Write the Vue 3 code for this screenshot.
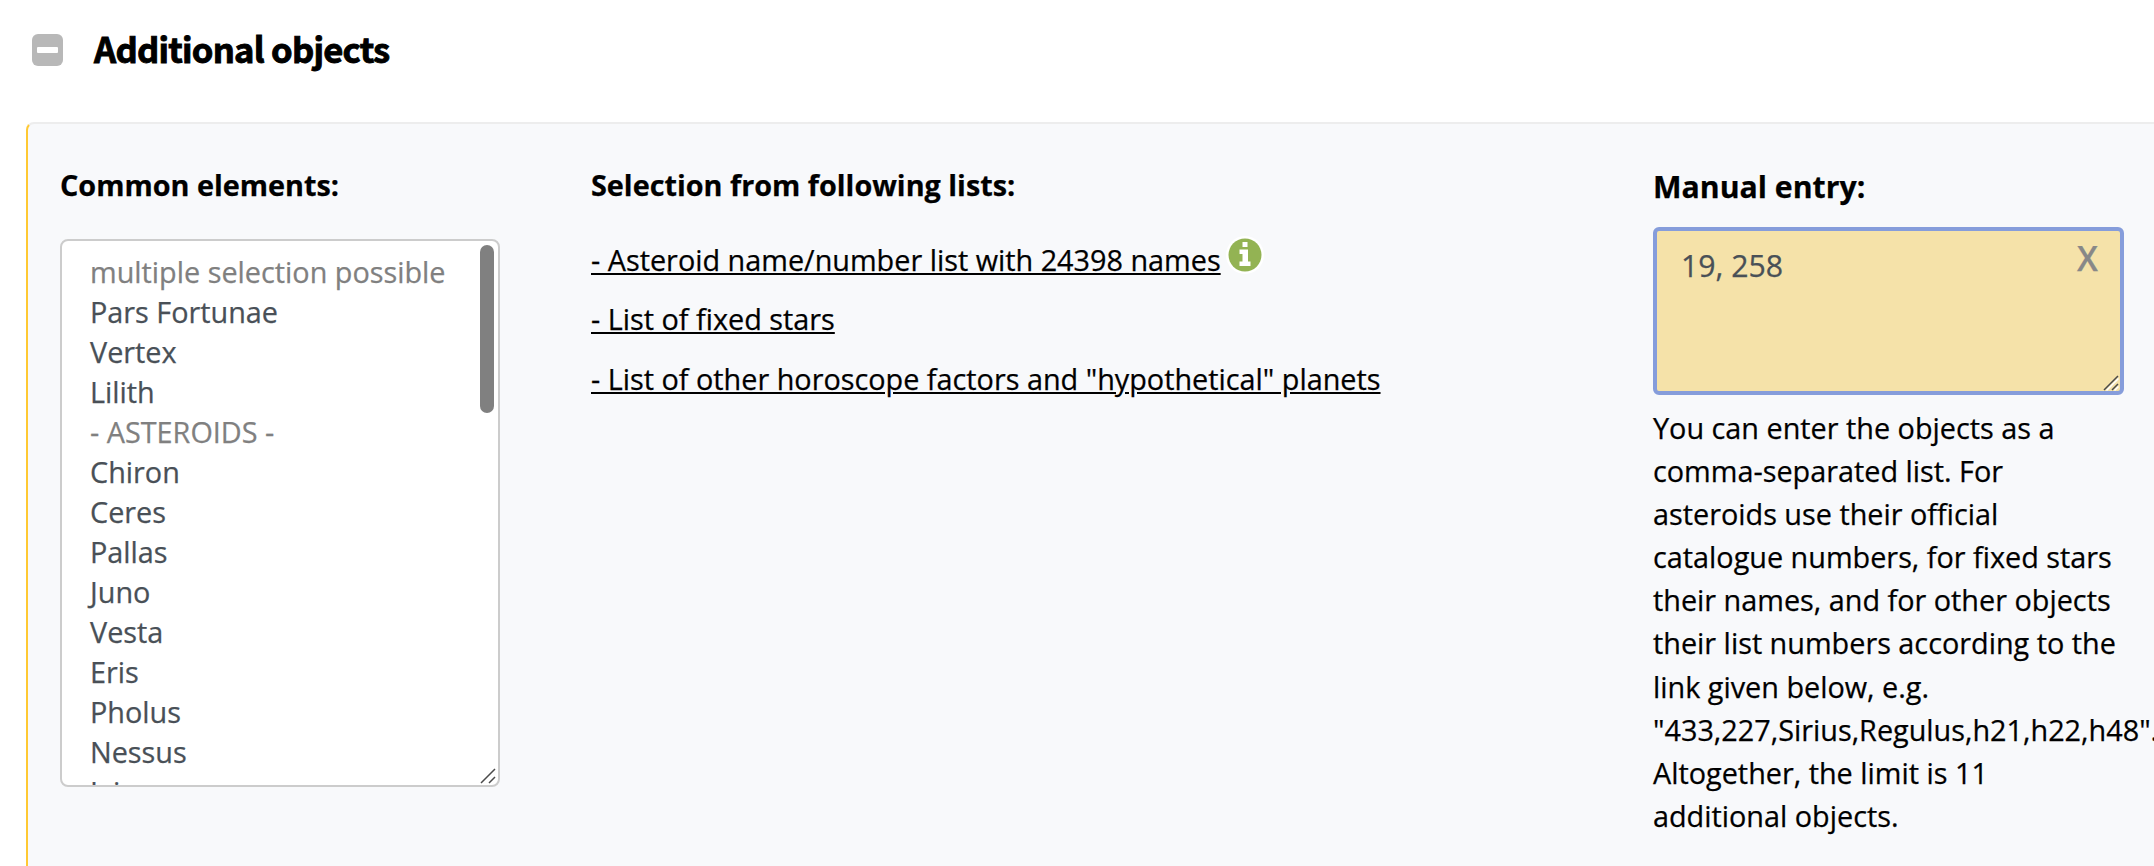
<template>
  <div class="page">
    <div class="section-title">
      <button class="toggle" aria-label="collapse">
        <span class="bar"></span>
      </button>
      <h2>Additional objects</h2>
    </div>

    <div class="panel">
      <div class="column common">
        <h3>Common elements:</h3>
        <div class="listbox">
          <div
            v-for="item in elements"
            :key="item.name"
            class="option"
            :class="{ disabled: item.disabled, selected: selected.includes(item.name) }"
            @click="toggle(item)"
          >{{ item.name }}</div>
          <span class="scrollbar"></span>
          <svg class="grip" width="16" height="16" viewBox="0 0 16 16">
            <path d="M1 15L15 1M9 15L15 9" />
          </svg>
        </div>
      </div>

      <div class="column lists">
        <h3>Selection from following lists:</h3>
        <div v-for="link in links" :key="link.text" class="link-row">
          <a href="#">{{ link.text }}</a>
          <svg v-if="link.info" class="info" width="38" height="38" viewBox="0 0 38 38">
            <circle cx="19" cy="19" r="19" fill="#fff" />
            <circle cx="19" cy="19" r="16.5" fill="#93b353" />
            <path fill="#fff" d="M16.5 6h5v5h-5zM13.500 13.5h8.500v12h2.500v4.500h-11v-4.500h3v-7.500h-3z" />
          </svg>
        </div>
      </div>

      <div class="column manual">
        <h3>Manual entry:</h3>
        <div class="entry">
          <textarea v-model="manual" spellcheck="false"></textarea>
          <button class="clear" @click="manual = ''">X</button>
          <svg class="grip" width="16" height="16" viewBox="0 0 16 16">
            <path class="light" d="M3.500 15.500L15.500 3.500M11.500 15.500L15.500 11.500" />
            <path d="M1 15L15 1M9 15L15 9" />
          </svg>
        </div>
        <p>
          You can enter the objects as a comma-separated list. For asteroids use their official
          catalogue numbers, for fixed stars their names, and for other objects their list numbers
          according to the link given below, e.g. "433,227,Sirius,Regulus,h21,h22,h48".
          Altogether, the limit is 11 additional objects.
        </p>
      </div>
    </div>
  </div>
</template>

<script setup>
import { ref } from 'vue';

const elements = [
  { name: 'multiple selection possible', disabled: true },
  { name: 'Pars Fortunae' },
  { name: 'Vertex' },
  { name: 'Lilith' },
  { name: '- ASTEROIDS -', disabled: true },
  { name: 'Chiron' },
  { name: 'Ceres' },
  { name: 'Pallas' },
  { name: 'Juno' },
  { name: 'Vesta' },
  { name: 'Eris' },
  { name: 'Pholus' },
  { name: 'Nessus' },
  { name: 'Ixion' },
];

const links = [
  { text: '- Asteroid name/number list with 24398 names', info: true },
  { text: '- List of fixed stars' },
  { text: '- List of other horoscope factors and "hypothetical" planets' },
];

const selected = ref([]);
const manual = ref('19, 258');

const toggle = (item) => {
  if (item.disabled) return;
  if (selected.value.includes(item.name)) {
    selected.value = selected.value.filter((name) => name !== item.name);
  } else {
    selected.value.push(item.name);
  }
};
</script>

<style>
body {
  background: #fff;
  overflow: hidden;
}
</style>

<style scoped>
.page {
  box-sizing: border-box;
  width: 2154px;
  height: 866px;
  overflow: hidden;
  font-family: "Open Sans", "Noto Sans", sans-serif;
  font-size: 28.8px;
  color: #000;
  -webkit-text-stroke: 0.25px currentColor;
}

.section-title {
  display: flex;
  align-items: center;
  height: 100px;
  padding-left: 32px;
  margin-bottom: 22px;
}

.toggle {
  display: flex;
  align-items: center;
  justify-content: center;
  width: 31px;
  height: 32px;
  margin-right: 31px;
  padding: 0;
  border: 0;
  border-radius: 6px;
  background: #b8b8b8;
}

.toggle .bar {
  width: 21px;
  height: 6px;
  border-radius: 1px;
  background: #fff;
}

h2 {
  margin: 0 0 5px;
  font-family: "Noto Sans CJK SC", sans-serif;
  font-size: 34.6px;
  font-weight: 700;
  line-height: 50px;
  letter-spacing: -0.75px;
  -webkit-text-stroke: 0.9px #000;
}

.panel {
  box-sizing: border-box;
  display: grid;
  grid-template-columns: 531px 1062px 470px;
  width: 2180px;
  height: 800px;
  margin-left: 26px;
  padding: 39px 0 0 32px;
  border: 2px solid #ededed;
  border-left-color: #ffc933;
  border-radius: 8px;
  background: #f8f9fb;
}

h3 {
  margin: 0;
  font-size: 28.8px;
  font-weight: 700;
  line-height: 43px;
  white-space: nowrap;
}

.listbox {
  position: relative;
  box-sizing: border-box;
  width: 440px;
  height: 548px;
  margin-top: 33px;
  padding: 11px 28px 0;
  overflow: hidden;
  border: 2px solid #ccc;
  border-radius: 8px;
  background: #fff;
}

.option {
  height: 40px;
  line-height: 40px;
  color: #495057;
  -webkit-text-stroke-color: currentColor;
  white-space: nowrap;
}

.option.disabled {
  color: #808080;
}

.option.selected {
  background: #d6d6d6;
}

.scrollbar {
  position: absolute;
  top: 4px;
  right: 4px;
  width: 14px;
  height: 168px;
  border-radius: 7px;
  background: #808080;
}

.grip {
  position: absolute;
  right: 2px;
  bottom: 1px;
  fill: none;
  stroke: #4a4a4a;
  stroke-width: 1.5;
}

.grip .light {
  stroke: #fff;
}

.lists h3 {
  margin-bottom: 24px;
}

.link-row {
  display: flex;
  height: 59.4px;
  line-height: 59px;
  white-space: nowrap;
}

a {
  color: #000;
  text-decoration: underline;
}

.info {
  margin: 6px 0 0 5px;
}

.manual h3 {
  margin: 2px 0 19px;
  font-size: 30.24px;
}

.entry {
  position: relative;
  width: 471px;
  height: 168px;
}

textarea {
  display: block;
  box-sizing: border-box;
  width: 471px;
  height: 168px;
  padding: 13px 24px;
  resize: none;
  outline: none;
  border: 4px solid #869ddb;
  border-radius: 6px;
  background: #f5e2a9;
  color: #495057;
  font-family: inherit;
  font-size: 30.24px;
  line-height: 43px;
  -webkit-text-stroke-color: currentColor;
}

.clear {
  position: absolute;
  top: 12px;
  right: 26px;
  padding: 0;
  border: 0;
  background: none;
  color: #888;
  font-family: inherit;
  font-size: 33.6px;
  font-weight: 600;
  line-height: 38px;
  -webkit-text-stroke-color: currentColor;
}

.entry .grip {
  right: 5px;
  bottom: 4px;
}

p {
  width: 470px;
  margin: 11px 0 0;
  line-height: 43.1px;
}
</style>
